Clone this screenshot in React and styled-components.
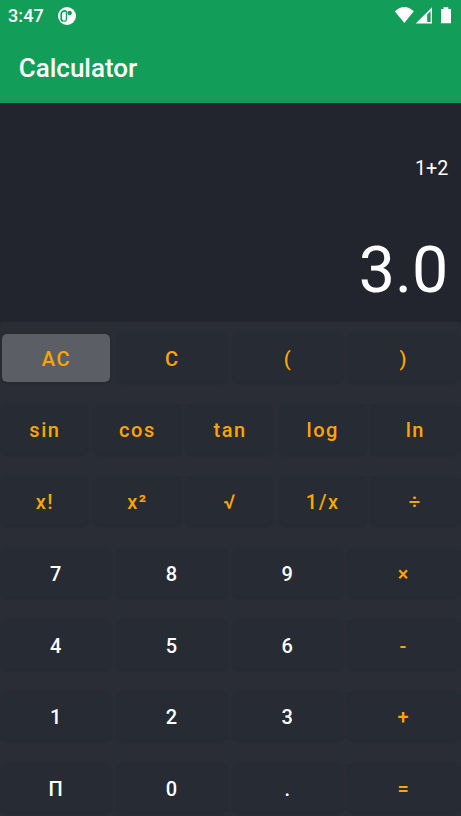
import React from 'react';
import styled, { createGlobalStyle } from 'styled-components';

const GlobalStyle = createGlobalStyle`
  * { box-sizing: border-box; }
  body { margin: 0; background: #22252d; font-family: Roboto, sans-serif; overflow: hidden; }
`;

const Screen = styled.div`
  display: flex;
  flex-direction: column;
  width: 461px;
  height: 816px;
  overflow: hidden;
  background: #22252d;
  color: #fff;
`;

const Header = styled.header`
  flex: none;
  height: 103px;
  background: #129e59;
`;

const StatusBar = styled.div`
  display: flex;
  align-items: center;
  height: 32px;
  padding: 0 9px 0 8px;
`;

const Clock = styled.span`
  width: 50px;
  font-size: 18px;
  font-weight: 500;
  line-height: 32px;
  letter-spacing: 0.1px;
`;

const StatusIcons = styled.div`
  display: flex;
  margin-left: auto;
`;

const Title = styled.h1`
  margin: 0;
  padding-left: 18.7px;
  font-size: 26px;
  font-weight: 500;
  line-height: 73px;
`;

const Display = styled.section`
  flex: none;
  display: flex;
  flex-direction: column;
  align-items: flex-end;
  height: 219px;
  padding: 51px 12.7px 0 0;
`;

const Expression = styled.div`
  font-size: 19.7px;
  line-height: 30px;
`;

const Result = styled.div`
  margin-top: 46px;
  font-size: 64.5px;
  line-height: 80px;
`;

const Keypad = styled.main`
  flex: none;
  display: flex;
  flex-direction: column;
  gap: 23.2px;
  height: 494px;
  padding: 11.5px 3.5px 0 2px;
  background: #2a2d36;
  border-radius: 3px 3px 0 0;
`;

const KeyRow = styled.div`
  flex: none;
  display: grid;
  grid-template-columns: repeat(${(p) => p.$columns}, 1fr);
  gap: 7.6px;
  height: 48.5px;
`;

const Key = styled.button`
  display: flex;
  align-items: center;
  justify-content: center;
  min-width: 0;
  padding: 2px 0 0 0.8px;
  border: 0;
  border-radius: 5px;
  background: ${(p) => (p.$pressed ? '#5c5e66' : '#272b33')};
  box-shadow: 0 1px 3px rgba(20, 23, 29, 0.25);
  color: ${(p) => (p.$digit ? '#fff' : '#ffa500')};
  font: 500 20px Roboto, sans-serif;
  letter-spacing: 1.6px;
`;

const rows = [
  ['AC', 'C', '(', ')'],
  ['sin', 'cos', 'tan', 'log', 'ln'],
  ['x!', 'x²', '√', '1/x', '÷'],
  ['7', '8', '9', '×'],
  ['4', '5', '6', '-'],
  ['1', '2', '3', '+'],
  ['П', '0', '.', '='],
];

const NotificationIcon = () => (
  <svg width="18" height="19" viewBox="0 0 18 19">
    <circle cx="9" cy="9" r="9" fill="#fff" />
    <path d="M8.3 4C5 3.6 3.2 4.8 3.2 7.2v4.2c0 1.5 1 2.5 2.4 2.7" fill="none" stroke="#129e59" strokeWidth="1.7" />
    <path d="M8.4 4v8.4c0 1.1-.9 1.8-2.3 1.8" fill="none" stroke="#129e59" strokeWidth="1.2" />
    <circle cx="11.6" cy="6" r="2.3" fill="#129e59" />
  </svg>
);

const SignalIcons = () => (
  <svg width="58" height="20" viewBox="0 0 58 20">
    <path d="M.8 5.3Q10.3-3.2 19.8 5.3L10.3 17Z" fill="#fff" />
    <path fillRule="evenodd" d="M38 1.2V17.4H21.7ZM36.6 5.1 33.2 8.6V16H36.6Z" fill="#fff" />
    <path d="M49.5 1.2h4.8v1.7h2.7V17.3H47V2.9h2.5Z" fill="#fff" />
  </svg>
);

export default function App() {
  return (
    <Screen>
      <GlobalStyle />
      <Header>
        <StatusBar>
          <Clock>3:47</Clock>
          <NotificationIcon />
          <StatusIcons>
            <SignalIcons />
          </StatusIcons>
        </StatusBar>
        <Title>Calculator</Title>
      </Header>
      <Display>
        <Expression>1+2</Expression>
        <Result>3.0</Result>
      </Display>
      <Keypad>
        {rows.map((keys) => (
          <KeyRow key={keys[0]} $columns={keys.length}>
            {keys.map((label) => (
              <Key key={label} $pressed={label === 'AC'} $digit={/^[0-9П.]$/.test(label)}>
                {label}
              </Key>
            ))}
          </KeyRow>
        ))}
      </Keypad>
    </Screen>
  );
}
